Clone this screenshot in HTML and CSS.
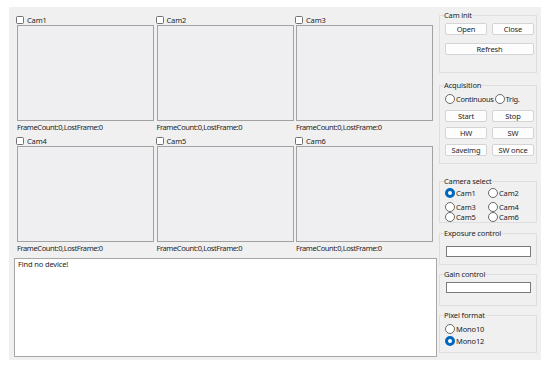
FILE: index.html
```html
<!DOCTYPE html>
<html lang="en">

<head>
    <meta charset="UTF-8">
    <title>Camera viewer</title>
    <link rel="stylesheet" href="styles.css">
</head>

<body>
    <div class="window">
        <div class="main">
            <div class="cams">
                <div class="cam">
                    <label class="check"><span class="box"></span>Cam1</label>
                    <div class="view"></div>
                    <div class="stats">FrameCount:0,LostFrame:0</div>
                </div>
                <div class="cam">
                    <label class="check"><span class="box"></span>Cam2</label>
                    <div class="view"></div>
                    <div class="stats">FrameCount:0,LostFrame:0</div>
                </div>
                <div class="cam">
                    <label class="check"><span class="box"></span>Cam3</label>
                    <div class="view"></div>
                    <div class="stats">FrameCount:0,LostFrame:0</div>
                </div>
                <div class="cam">
                    <label class="check"><span class="box"></span>Cam4</label>
                    <div class="view"></div>
                    <div class="stats">FrameCount:0,LostFrame:0</div>
                </div>
                <div class="cam">
                    <label class="check"><span class="box"></span>Cam5</label>
                    <div class="view"></div>
                    <div class="stats">FrameCount:0,LostFrame:0</div>
                </div>
                <div class="cam">
                    <label class="check"><span class="box"></span>Cam6</label>
                    <div class="view"></div>
                    <div class="stats">FrameCount:0,LostFrame:0</div>
                </div>
            </div>
            <div class="log">Find no device!</div>
        </div>

        <div class="side">
            <fieldset class="group init">
                <legend>Cam init</legend>
                <div class="btns init-btns">
                    <button>Open</button>
                    <button>Close</button>
                    <button class="wide">Refresh</button>
                </div>
            </fieldset>

            <fieldset class="group acq">
                <legend>Acquisition</legend>
                <div class="radios">
                    <label class="radio"><span class="dot"></span>Continuous</label>
                    <label class="radio"><span class="dot"></span>Trig.</label>
                </div>
                <div class="btns acq-btns">
                    <button>Start</button>
                    <button>Stop</button>
                    <button>HW</button>
                    <button>SW</button>
                    <button>Saveimg</button>
                    <button>SW once</button>
                </div>
            </fieldset>

            <fieldset class="group select">
                <legend>Camera select</legend>
                <div class="cam-grid">
                    <label class="radio"><span class="dot on"></span>Cam1</label>
                    <label class="radio"><span class="dot"></span>Cam2</label>
                    <label class="radio"><span class="dot"></span>Cam3</label>
                    <label class="radio"><span class="dot"></span>Cam4</label>
                    <label class="radio"><span class="dot"></span>Cam5</label>
                    <label class="radio"><span class="dot"></span>Cam6</label>
                </div>
            </fieldset>

            <fieldset class="group exposure">
                <legend>Exposure control</legend>
                <div class="field"></div>
            </fieldset>

            <fieldset class="group gain">
                <legend>Gain control</legend>
                <div class="field"></div>
            </fieldset>

            <fieldset class="group pixel">
                <legend>Pixel format</legend>
                <div class="stack">
                    <label class="radio"><span class="dot"></span>Mono10</label>
                    <label class="radio"><span class="dot on"></span>Mono12</label>
                </div>
            </fieldset>
        </div>
    </div>
</body>

</html>
```

FILE: styles.css
```css
body {
    margin: 0;
    padding: 7px 9px;
    background-color: #fff;
    font-family: 'Noto Sans', 'Liberation Sans', sans-serif;
    font-size: 7.5px;
    letter-spacing: -0.15px;
    color: #1e1e1e;
}

.window {
    display: flex;
    width: 532px;
    height: 353px;
    background-color: #f0f0f1;
}

/* left side: camera views and log */
.main {
    width: 430px;
    padding: 7px 0 0 5px;
    box-sizing: border-box;
}

.cams {
    display: grid;
    grid-template-columns: repeat(3, 137px);
    column-gap: 2.5px;
    row-gap: 2px;
    margin-left: 3px;
}

.cam {
    display: flex;
    flex-direction: column;
}

.check {
    display: flex;
    align-items: center;
    gap: 3px;
    height: 11px;
    margin-left: -1px;
}

.box {
    width: 6px;
    height: 6px;
    border: 1px solid #707070;
    border-radius: 1.5px;
    background-color: #fff;
}

.view {
    height: 96px;
    border: 1px solid #a2a2a2;
    box-sizing: border-box;
    background-color: #efeff2;
}

.stats {
    height: 12px;
    line-height: 12px;
    letter-spacing: -0.4px;
}

.log {
    margin-top: 4px;
    width: 423px;
    height: 99px;
    box-sizing: border-box;
    padding: 0 3px;
    border: 1px solid #a7a7a7;
    background-color: #fff;
}

/* right side: control groups */
.side {
    width: 102px;
    padding-top: 3px;
    display: flex;
    flex-direction: column;
}

.group {
    width: 98px;
    margin: 0;
    padding: 0 2px 0 5px;
    box-sizing: border-box;
    border: 1px solid #dedee0;
    min-width: 0;
}

.group legend {
    padding: 0;
    margin-left: -1px;
    line-height: 11px;
}

.init {
    height: 63px;
    padding-top: 2px;
}

.acq {
    height: 84px;
    margin-top: 7px;
    padding-top: 3px;
}

.select {
    height: 47px;
    margin-top: 12px;
    padding-top: 1px;
}

.exposure {
    height: 37px;
    margin-top: 5px;
    padding-top: 7px;
}

.gain {
    height: 37px;
    margin-top: 4px;
    padding-top: 2px;
}

.pixel {
    height: 43px;
    margin-top: 4px;
    padding-top: 3px;
}

.btns {
    display: grid;
    grid-template-columns: 42px 42px;
    column-gap: 5px;
}

.init-btns {
    row-gap: 8px;
}

.acq-btns {
    row-gap: 5px;
    margin-top: 6px;
}

.wide {
    grid-column: span 2;
}

button {
    height: 12px;
    padding: 0;
    font: inherit;
    letter-spacing: inherit;
    color: #1e1e1e;
    background-color: #fdfdfd;
    border: 1px solid #d4d4d6;
    border-radius: 2px;
}

.radios {
    display: flex;
    gap: 1px;
    letter-spacing: -0.3px;
}

.radio {
    display: flex;
    align-items: center;
    gap: 1px;
    height: 10px;
}

.dot {
    width: 8px;
    height: 8px;
    border: 1px solid #6a6a6a;
    border-radius: 50%;
    background-color: #fff;
}

.dot.on {
    width: 4px;
    height: 4px;
    border: 3px solid #0067c0;
}

.cam-grid {
    display: grid;
    grid-template-columns: 43px 43px;
    grid-template-rows: 14px 10px 10px;
}

.field {
    width: 85px;
    height: 11px;
    margin-left: 1px;
    box-sizing: border-box;
    border: 1px solid #7a7a7a;
    background-color: #fff;
}

.stack {
    display: flex;
    flex-direction: column;
    gap: 2px;
}
```
